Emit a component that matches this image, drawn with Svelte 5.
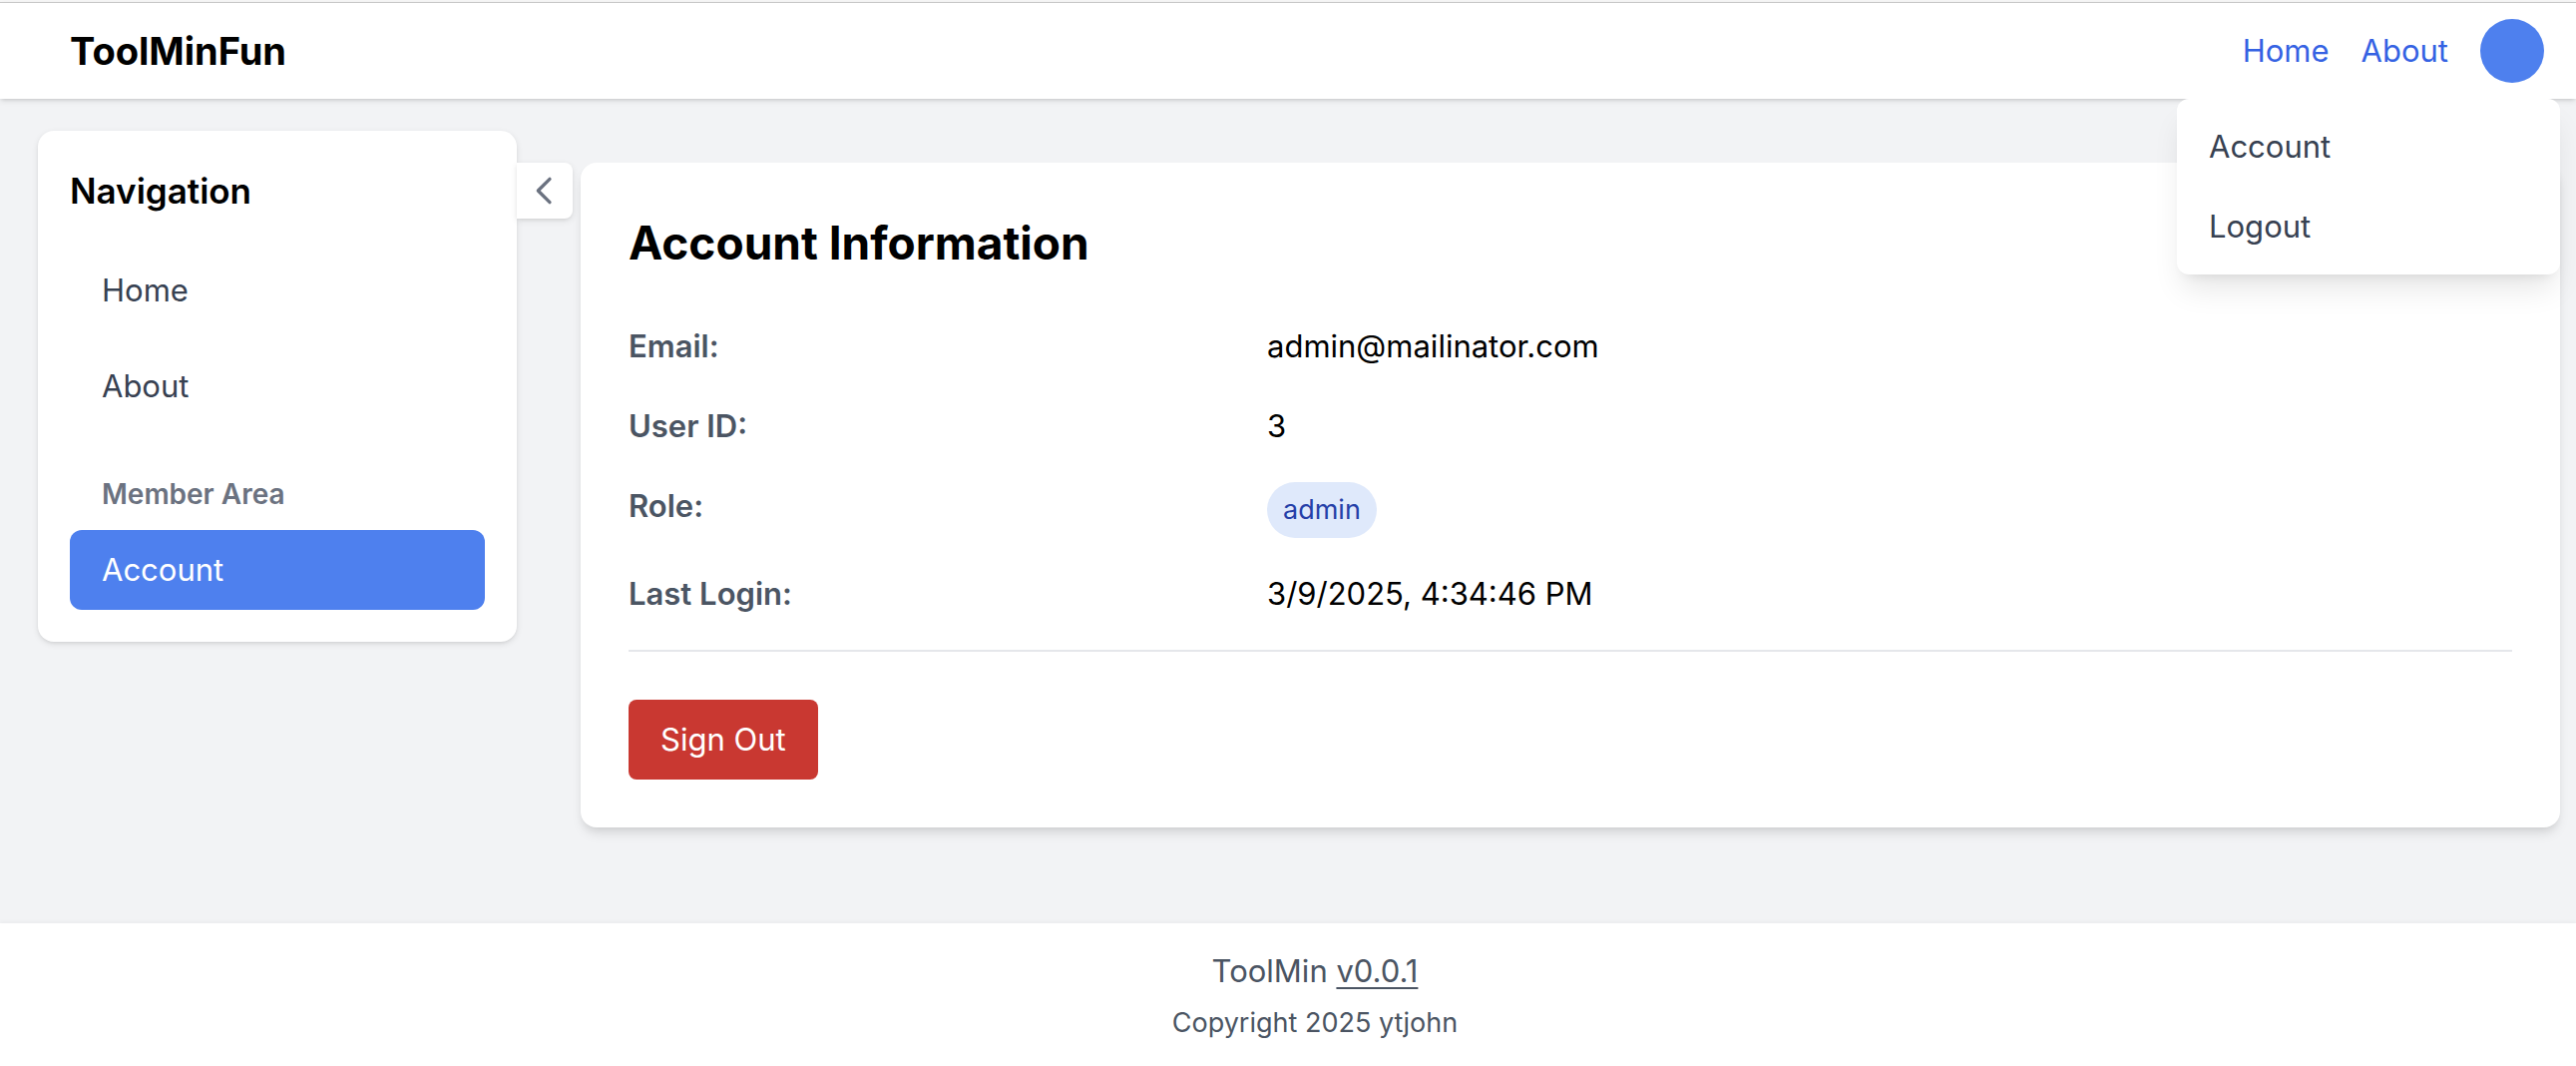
<script>
  let menuOpen = $state(true);

  const links = ['Home', 'About'];
</script>

<div class="page">
  <header class="topbar">
    <h1 class="brand">ToolMinFun</h1>
    <nav class="toplinks" aria-label="Top">
      {#each links as link}
        <a href="#{link.toLowerCase()}">{link}</a>
      {/each}
      <div class="profile">
        <button
          class="avatar"
          type="button"
          aria-label="User menu"
          aria-expanded={menuOpen}
          onclick={() => (menuOpen = !menuOpen)}
        ></button>
        {#if menuOpen}
          <div class="menu">
            <a href="#account">Account</a>
            <button type="button">Logout</button>
          </div>
        {/if}
      </div>
    </nav>
  </header>

  <div class="body">
    <aside class="sidebar">
      <h2>Navigation</h2>
      <nav class="sidenav" aria-label="Sidebar">
        {#each links as link}
          <a href="#{link.toLowerCase()}">{link}</a>
        {/each}
      </nav>
      <h3>Member Area</h3>
      <nav class="sidenav" aria-label="Member area">
        <a class="active" href="#account" aria-current="page">Account</a>
      </nav>
    </aside>

    <button class="collapse" type="button" aria-label="Collapse sidebar">
      <svg viewBox="0 0 24 24" aria-hidden="true"><path d="M15 19l-7-7 7-7" /></svg>
    </button>

    <main class="card">
      <h2>Account Information</h2>
      <dl>
        <dt>Email:</dt>
        <dd>admin@mailinator.com</dd>
        <dt>User ID:</dt>
        <dd>3</dd>
        <dt>Role:</dt>
        <dd><span class="badge">admin</span></dd>
        <dt>Last Login:</dt>
        <dd>3/9/2025, 4:34:46 PM</dd>
      </dl>
      <div class="actions">
        <button class="signout" type="button">Sign Out</button>
      </div>
    </main>
  </div>

  <footer>
    <p class="version">ToolMin <a href="#version">v0.0.1</a></p>
    <p class="copyright">Copyright 2025 ytjohn</p>
  </footer>
</div>

<style>
  :global(body) {
    background: #f2f3f5;
  }

  .page {
    display: flex;
    flex-direction: column;
    min-height: 100vh;
    box-sizing: border-box;
    border-top: 2px solid #f8f8f8;
    background: #f2f3f5;
    color: #000;
    font-family: Inter, 'Liberation Sans', sans-serif;
    font-size: 31px;
    line-height: 48px;
  }

  h1,
  h2,
  h3,
  p,
  dl,
  dd {
    margin: 0;
  }

  a {
    color: inherit;
    text-decoration: none;
  }

  button {
    border: 0;
    padding: 0;
    background: none;
    color: inherit;
    font: inherit;
    text-align: left;
    cursor: pointer;
  }

  .topbar {
    position: relative;
    z-index: 1;
    display: flex;
    align-items: center;
    justify-content: space-between;
    padding: 16px 32px 16px 70px;
    border-top: 1px solid #c8c8c8;
    background: #fff;
    box-shadow: 0 2px 6px rgba(0, 0, 0, 0.1), 0 2px 4px -2px rgba(0, 0, 0, 0.16);
  }

  .brand {
    font-size: 38px;
    font-weight: 700;
    line-height: 56px;
  }

  .toplinks {
    display: flex;
    align-items: center;
    gap: 32px;
    color: #3562e3;
  }

  .profile {
    position: relative;
  }

  .avatar {
    display: block;
    width: 64px;
    height: 64px;
    border-radius: 50%;
    background: #4e80ee;
  }

  .menu {
    position: absolute;
    top: 80px;
    right: -16px;
    width: 384px;
    box-sizing: border-box;
    padding: 8px 0;
    border-radius: 12px;
    background: #fff;
    color: #374151;
    box-shadow: 0 20px 30px -6px rgba(0, 0, 0, 0.1), 0 8px 12px -8px rgba(0, 0, 0, 0.1);
  }

  .menu a,
  .menu button {
    display: block;
    width: 100%;
    box-sizing: border-box;
    padding: 16px 32px;
  }

  .body {
    display: flex;
    align-items: flex-start;
    padding: 32px 16px 96px 38px;
  }

  .sidebar {
    flex: none;
    width: 480px;
    box-sizing: border-box;
    padding: 32px;
    border-radius: 16px;
    background: #fff;
    box-shadow: 0 2px 6px rgba(0, 0, 0, 0.1), 0 2px 4px -2px rgba(0, 0, 0, 0.1);
  }

  .sidebar h2 {
    margin-bottom: 32px;
    font-size: 35px;
    font-weight: 600;
    line-height: 56px;
  }

  .sidebar h3 {
    margin: 48px 0 16px;
    padding: 0 32px;
    color: #6b7280;
    font-size: 28px;
    font-weight: 600;
    line-height: 40px;
  }

  .sidenav {
    display: flex;
    flex-direction: column;
    gap: 16px;
    color: #374151;
  }

  .sidenav a {
    padding: 16px 32px;
    border-radius: 12px;
  }

  .sidenav .active {
    background: #4e80ee;
    color: #fff;
  }

  .collapse {
    flex: none;
    display: grid;
    place-items: center;
    width: 56px;
    height: 56px;
    margin: 32px 8px 0 0;
    border-radius: 0 8px 8px 0;
    background: #fff;
    color: #6b7280;
    box-shadow: 0 2px 6px rgba(0, 0, 0, 0.1), 0 2px 4px -2px rgba(0, 0, 0, 0.1);
  }

  .collapse svg {
    width: 40px;
    height: 40px;
    fill: none;
    stroke: currentColor;
    stroke-width: 2;
    stroke-linecap: round;
    stroke-linejoin: round;
  }

  .card {
    flex: 1;
    min-width: 0;
    margin-top: 32px;
    padding: 48px;
    border-radius: 16px;
    background: #fff;
    box-shadow: 0 8px 12px -2px rgba(0, 0, 0, 0.1), 0 4px 8px -4px rgba(0, 0, 0, 0.1);
  }

  .card h2 {
    margin-bottom: 48px;
    font-size: 46px;
    font-weight: 700;
    line-height: 64px;
  }

  dl {
    display: grid;
    grid-template-columns: repeat(3, minmax(0, 1fr));
    gap: 32px;
  }

  dt {
    color: #4b5563;
    font-weight: 600;
  }

  dd {
    grid-column: span 2;
  }

  .badge {
    display: block;
    width: fit-content;
    padding: 8px 16px;
    border-radius: 28px;
    background: #dfe9fb;
    color: #2540a8;
    font-size: 27px;
    line-height: 40px;
  }

  .actions {
    margin-top: 32px;
    padding-top: 48px;
    border-top: 2px solid #e5e7eb;
  }

  .signout {
    display: block;
    padding: 16px 32px;
    border-radius: 8px;
    background: #c93831;
    color: #fff;
  }

  footer {
    flex: 1;
    padding: 24px 0 24px 54px;
    background: #fff;
    color: #4b5563;
    text-align: center;
    box-shadow: 0 -2px 4px rgba(0, 0, 0, 0.03);
  }

  .version a {
    text-decoration: underline;
    text-decoration-thickness: 2px;
    text-underline-offset: 5px;
  }

  .copyright {
    margin-top: 8px;
    font-size: 27px;
    line-height: 40px;
  }
</style>
